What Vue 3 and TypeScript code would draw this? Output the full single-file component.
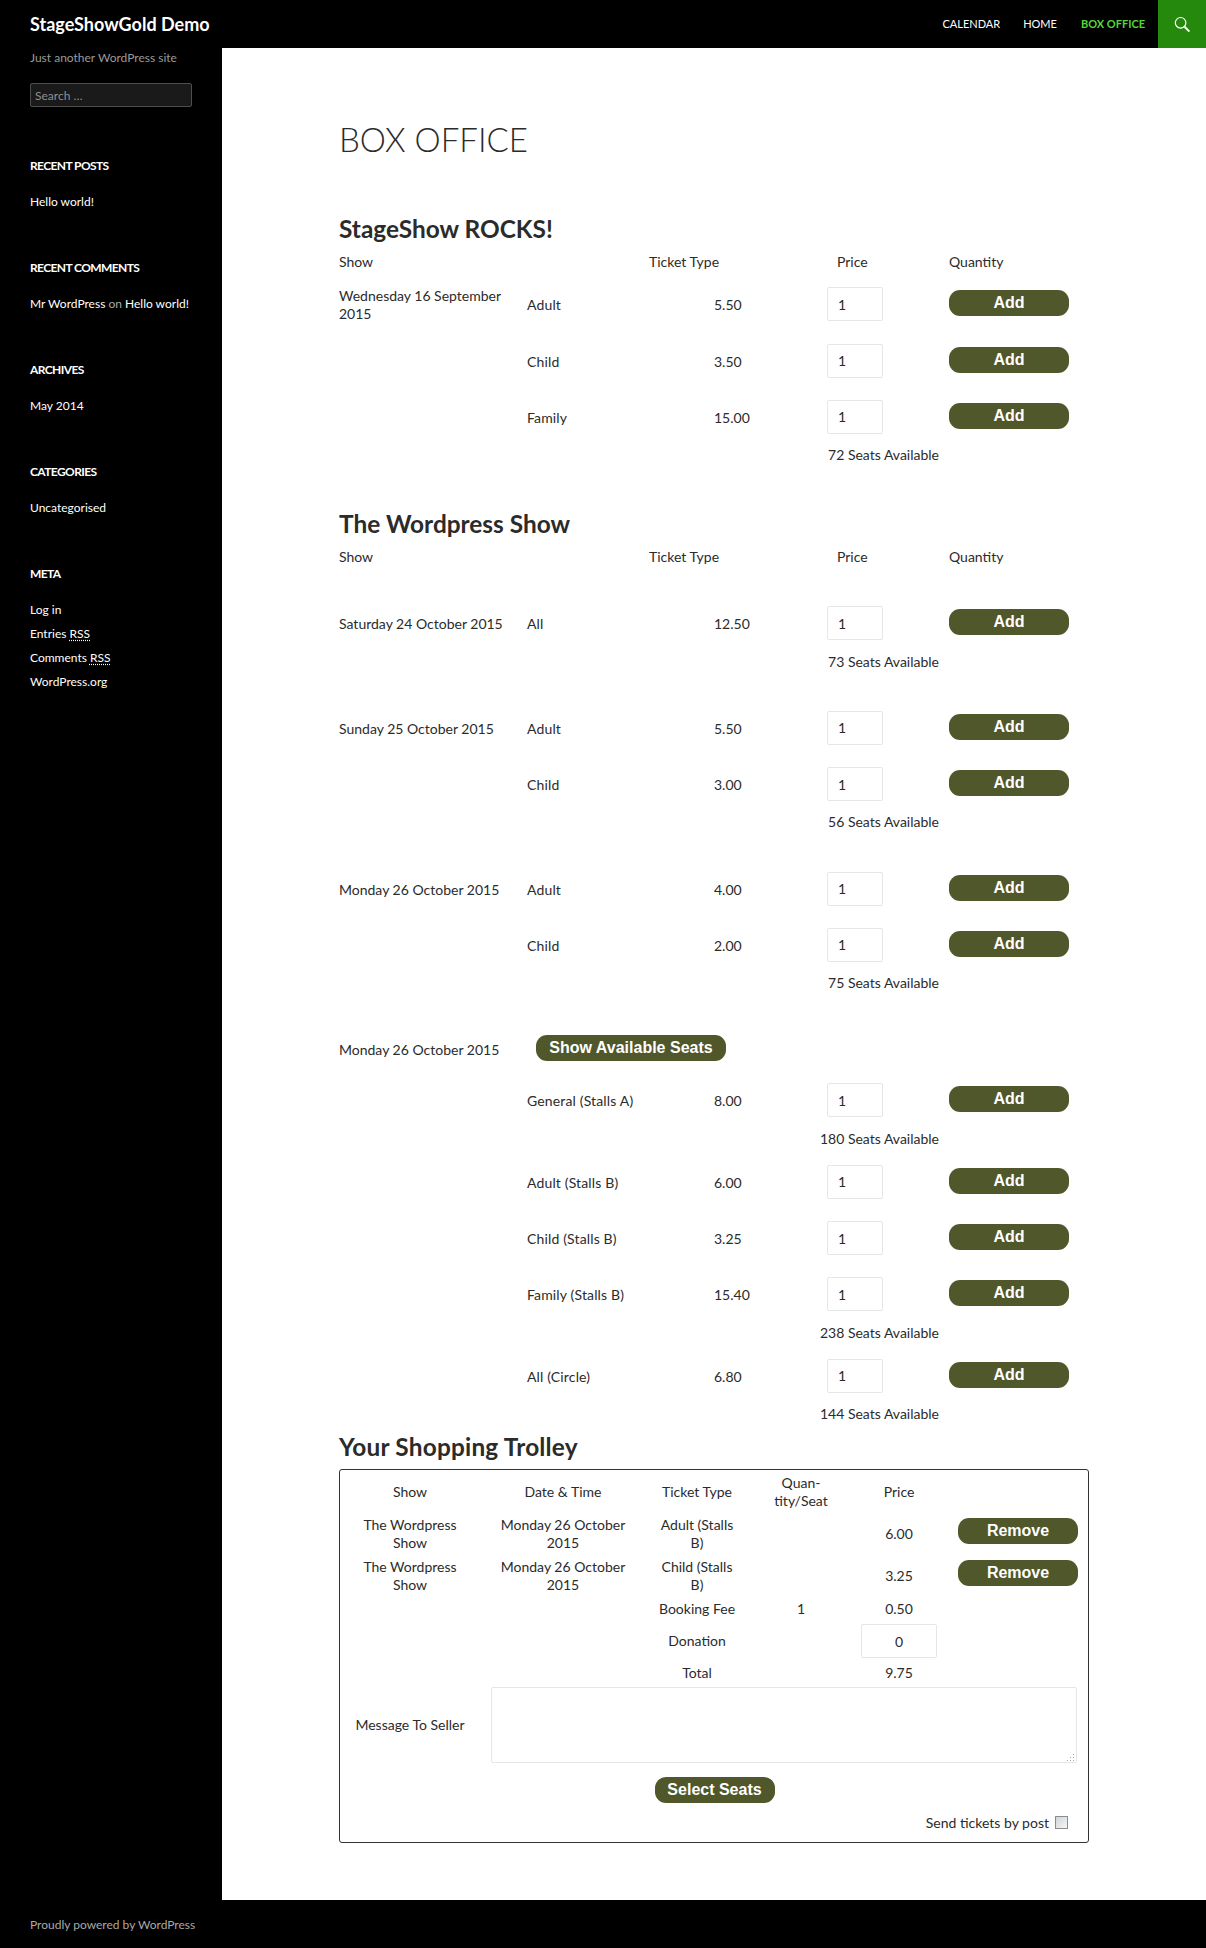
<script setup lang="ts">
interface Row { type: string; price: string; seats?: string }
interface Perf { date: string; chooser?: boolean; rows: Row[] }
interface Show { title: string; perfs: Perf[] }

const shows: Show[] = [
  {
    title: 'StageShow ROCKS!',
    perfs: [
      {
        date: 'Wednesday 16 September 2015',
        rows: [
          { type: 'Adult', price: '5.50' },
          { type: 'Child', price: '3.50' },
          { type: 'Family', price: '15.00', seats: '72 Seats Available' },
        ],
      },
    ],
  },
  {
    title: 'The Wordpress Show',
    perfs: [
      { date: 'Saturday 24 October 2015', rows: [{ type: 'All', price: '12.50', seats: '73 Seats Available' }] },
      {
        date: 'Sunday 25 October 2015',
        rows: [
          { type: 'Adult', price: '5.50' },
          { type: 'Child', price: '3.00', seats: '56 Seats Available' },
        ],
      },
      {
        date: 'Monday 26 October 2015',
        rows: [
          { type: 'Adult', price: '4.00' },
          { type: 'Child', price: '2.00', seats: '75 Seats Available' },
        ],
      },
      {
        date: 'Monday 26 October 2015',
        chooser: true,
        rows: [
          { type: 'General (Stalls A)', price: '8.00', seats: '180 Seats Available' },
          { type: 'Adult (Stalls B)', price: '6.00' },
          { type: 'Child (Stalls B)', price: '3.25' },
          { type: 'Family (Stalls B)', price: '15.40', seats: '238 Seats Available' },
          { type: 'All (Circle)', price: '6.80', seats: '144 Seats Available' },
        ],
      },
    ],
  },
]

const trolley = [
  { type: 'Adult (Stalls B)', price: '6.00' },
  { type: 'Child (Stalls B)', price: '3.25' },
]
</script>

<template>
  <div class="page">
    <header class="topbar">
      <div class="site-title">StageShowGold Demo</div>
      <nav class="nav">
        <a>Calendar</a>
        <a>Home</a>
        <a class="current">Box Office</a>
      </nav>
      <div class="search-tab">
        <svg width="17" height="17" viewBox="0 0 17 17" fill="none" stroke="#fff">
          <circle cx="6.6" cy="6.8" r="5.3" stroke-width="1.2" />
          <path d="M10.6 10.8 L15.4 15.6" stroke-width="2" />
        </svg>
      </div>
    </header>

    <div class="body">
      <aside class="sidebar">
        <p class="tagline">Just another WordPress site</p>
        <input class="search" type="text" placeholder="Search …" />

        <section class="widget">
          <h3>Recent Posts</h3>
          <p>Hello world!</p>
        </section>
        <section class="widget">
          <h3>Recent Comments</h3>
          <p>Mr WordPress <span class="muted">on</span> Hello world!</p>
        </section>
        <section class="widget">
          <h3>Archives</h3>
          <p>May 2014</p>
        </section>
        <section class="widget">
          <h3>Categories</h3>
          <p>Uncategorised</p>
        </section>
        <section class="widget">
          <h3>Meta</h3>
          <p>Log in</p>
          <p>Entries <abbr>RSS</abbr></p>
          <p>Comments <abbr>RSS</abbr></p>
          <p>WordPress.org</p>
        </section>
      </aside>

      <main class="main">
        <h1>Box Office</h1>

        <section v-for="show in shows" :key="show.title" class="show">
          <h2>{{ show.title }}</h2>
          <div class="head">
            <span>Show</span>
            <span>Ticket Type</span>
            <span>Price</span>
            <span>Quantity</span>
          </div>
          <div v-for="(perf, p) in show.perfs" :key="p" class="perf" :class="{ 'has-chooser': perf.chooser }">
            <div v-if="perf.chooser" class="chooser">
              <span class="date">{{ perf.date }}</span>
              <button class="btn wide">Show Available Seats</button>
            </div>
            <div class="perf-rows">
              <template v-for="(row, r) in perf.rows" :key="r">
                <div class="row">
                  <span class="date">{{ r === 0 && !perf.chooser ? perf.date : '' }}</span>
                  <span class="type">{{ row.type }}</span>
                  <span class="price">{{ row.price }}</span>
                  <input class="qty" type="text" value="1" />
                  <button class="btn add">Add</button>
                </div>
                <div v-if="row.seats" class="seats">{{ row.seats }}</div>
              </template>
            </div>
          </div>
        </section>

        <h2 class="trolley-title">Your Shopping Trolley</h2>
        <div class="trolley">
          <div class="t-grid">
            <span>Show</span>
            <span>Date &amp; Time</span>
            <span>Ticket Type</span>
            <span class="narrow">Quan-tity/Seat</span>
            <span>Price</span>
            <span></span>

            <template v-for="item in trolley" :key="item.type">
              <span class="t-show">The Wordpress Show</span>
              <span class="t-date">Monday 26 October 2015</span>
              <span class="t-type">{{ item.type }}</span>
              <span></span>
              <span>{{ item.price }}</span>
              <span class="t-action"><button class="btn add">Remove</button></span>
            </template>

            <span></span><span></span>
            <span>Booking Fee</span>
            <span>1</span>
            <span>0.50</span>
            <span></span>

            <span></span><span></span>
            <span>Donation</span>
            <span></span>
            <span><input class="donation" type="text" value="0" /></span>
            <span></span>

            <span></span><span></span>
            <span>Total</span>
            <span></span>
            <span>9.75</span>
            <span></span>
          </div>

          <div class="message">
            <label>Message To Seller</label>
            <div class="area">
              <textarea></textarea>
              <svg class="grip" width="8" height="8" viewBox="0 0 8 8" fill="#a8a8a8">
                <rect x="6" y="0" width="1" height="1" />
                <rect x="3" y="3" width="1" height="1" />
                <rect x="6" y="3" width="1" height="1" />
                <rect x="0" y="6" width="1" height="1" />
                <rect x="3" y="6" width="1" height="1" />
                <rect x="6" y="6" width="1" height="1" />
              </svg>
            </div>
          </div>

          <div class="select-row">
            <button class="btn add">Select Seats</button>
          </div>

          <div class="post-row">
            <span>Send tickets by post</span>
            <input class="check" type="checkbox" />
          </div>
        </div>
      </main>
    </div>

    <footer class="footer">Proudly powered by WordPress</footer>
  </div>
</template>

<style>
html,
body {
  margin: 0;
  background: #000;
}
</style>

<style scoped>
.page {
  width: 1206px;
  height: 1948px;
  display: flex;
  flex-direction: column;
  font-family: Lato, sans-serif;
  font-size: 14px;
  line-height: 18px;
  color: #2b2b2b;
  background: #000;
}
.topbar {
  height: 48px;
  flex: none;
  display: flex;
  align-items: center;
  background: #000;
  padding-left: 30px;
}
.site-title {
  font-size: 18px;
  font-weight: 700;
  color: #fff;
  flex: 1;
}
.nav {
  display: flex;
  gap: 24px;
  margin-right: 13px;
  font-size: 11px;
  text-transform: uppercase;
  color: #fff;
}
.nav a:first-child {
  margin-right: -1px;
}
.nav .current {
  color: #55d737;
  font-weight: 700;
}
.search-tab {
  width: 48px;
  height: 48px;
  background: #24890d;
  display: flex;
  align-items: center;
  justify-content: center;
}
.body {
  flex: 1;
  display: flex;
}
.sidebar {
  width: 222px;
  flex: none;
  box-sizing: border-box;
  padding: 0 30px;
  color: #fff;
  font-size: 12px;
  background: #000;
}
.tagline {
  margin: 1px 0 16px;
  color: #9a9a9a;
}
.search {
  display: block;
  box-sizing: border-box;
  width: 162px;
  height: 24px;
  padding: 0 4px;
  background: #1a1a1a;
  border: 1px solid #4d4d4d;
  border-radius: 2px;
  font: 12px Lato, sans-serif;
  color: #aaa;
}
.search::placeholder {
  color: #8f8f8f;
}
.widget {
  height: 102px;
}
.sidebar .widget:first-of-type {
  margin-top: 50px;
}
.widget h3 {
  margin: 0 0 18px;
  font-size: 12px;
  font-weight: 700;
  letter-spacing: -0.6px;
  text-transform: uppercase;
  line-height: 18px;
}
.widget p {
  margin: 0 0 6px;
  line-height: 18px;
}
.muted {
  color: #aaa;
}
abbr {
  text-decoration: underline dotted;
  text-underline-offset: 2px;
}
.main {
  flex: 1;
  background: #fff;
  padding-left: 117px;
}
h1 {
  margin: 68px 0 0;
  font-size: 33px;
  line-height: 46px;
  font-weight: 300;
  text-transform: uppercase;
}
h2 {
  margin: 0;
  font-size: 24.4px;
  line-height: 36px;
  font-weight: 700;
}
.show h2 {
  margin-top: 49px;
}
.show + .show h2 {
  margin-top: 35px;
}
.head {
  display: grid;
  grid-template-columns: 310px 188px 112px 1fr;
  height: 18px;
  margin-top: 6px;
}
.perf-rows {
  display: flex;
  flex-direction: column;
}
.perf {
  padding-top: 23px;
}
.head + .perf {
  padding-top: 6px;
}
.show + .show .head + .perf {
  padding-top: 30px;
}
.has-chooser {
  margin-top: 4px;
}
.row {
  display: grid;
  grid-template-columns: 188px 187px 113px 122px 120px;
  align-items: center;
  height: 56.4px;
}
.row .date {
  max-width: 170px;
}
.type {
  letter-spacing: 0.15px;
}
.qty {
  box-sizing: border-box;
  width: 56px;
  height: 34px;
  margin-top: -2px;
  border: 1px solid #e6e6e6;
  border-radius: 2px;
  padding: 0 10px;
  font: 14px Lato, sans-serif;
  color: #2b2b2b;
  background: #fff;
}
.row .add {
  justify-self: start;
  margin-top: -4px;
}
.btn {
  height: 26px;
  border: 0;
  border-radius: 11px;
  background: #50572a;
  color: #fff;
  font: 700 16px/22px "Liberation Sans", Arial, sans-serif;
  padding: 0;
  text-align: center;
}
.add {
  width: 120px;
}
.wide {
  width: 190px;
}
.seats {
  height: 20px;
  width: 600px;
  margin: -1px 0 6px;
  line-height: 20px;
  text-align: right;
}
.chooser {
  display: grid;
  grid-template-columns: 197px auto;
  justify-content: start;
  align-items: center;
  height: 47px;
}
.chooser .wide {
  margin-top: -3px;
}
.trolley-title {
  margin-top: -1px;
  height: 36px;
  letter-spacing: 0.2px;
}
.trolley {
  box-sizing: border-box;
  width: 750px;
  height: 374px;
  margin-top: 4px;
  border: 1px solid #333;
  border-radius: 3px;
  padding: 4px 0 0 5px;
  text-align: center;
}
.t-grid {
  display: grid;
  grid-template-columns: 130px 176px 92px 116px 80px 140px;
  grid-auto-rows: min-content;
  row-gap: 6px;
  align-items: center;
}
.narrow {
  width: 64px;
  justify-self: center;
}
.t-show {
  padding: 0 15px;
}
.t-date {
  padding: 0 16px;
}
.t-type {
  padding: 0 7px;
}
.t-action {
  padding-left: 19px;
}
.t-action .add {
  display: block;
  margin-top: -6px;
}
.donation {
  box-sizing: border-box;
  width: 76px;
  height: 34px;
  border: 1px solid #e6e6e6;
  border-radius: 2px;
  text-align: center;
  font: 14px Lato, sans-serif;
  color: #2b2b2b;
  background: #fff;
  display: block;
  margin: 0 auto;
}
.message {
  display: grid;
  grid-template-columns: 130px 1fr;
  column-gap: 16px;
  align-items: center;
  margin-top: 5px;
}
.area {
  position: relative;
  width: 586px;
  height: 76px;
}
textarea {
  box-sizing: border-box;
  display: block;
  width: 586px;
  height: 76px;
  border: 1px solid #e6e6e6;
  border-radius: 2px;
  background: #fff;
  margin: 0;
  resize: none;
}
.grip {
  position: absolute;
  right: 2px;
  bottom: 1px;
}
.select-row {
  margin-top: 14px;
  padding-right: 4px;
  display: flex;
  justify-content: center;
  height: 26px;
}
.post-row {
  margin-top: 11px;
  display: flex;
  justify-content: flex-end;
  align-items: center;
  gap: 6px;
  padding-right: 20px;
}
.check {
  appearance: none;
  box-sizing: border-box;
  width: 13px;
  height: 13px;
  margin: -2px 0 0;
  border: 1px solid #8c8c8c;
  background: linear-gradient(135deg, #cfd4d9, #f5f6f7);
}
.footer {
  height: 48px;
  flex: none;
  box-sizing: border-box;
  padding: 2px 0 0 30px;
  display: flex;
  align-items: center;
  font-size: 12px;
  color: #a9a9a9;
  background: #000;
}
</style>
